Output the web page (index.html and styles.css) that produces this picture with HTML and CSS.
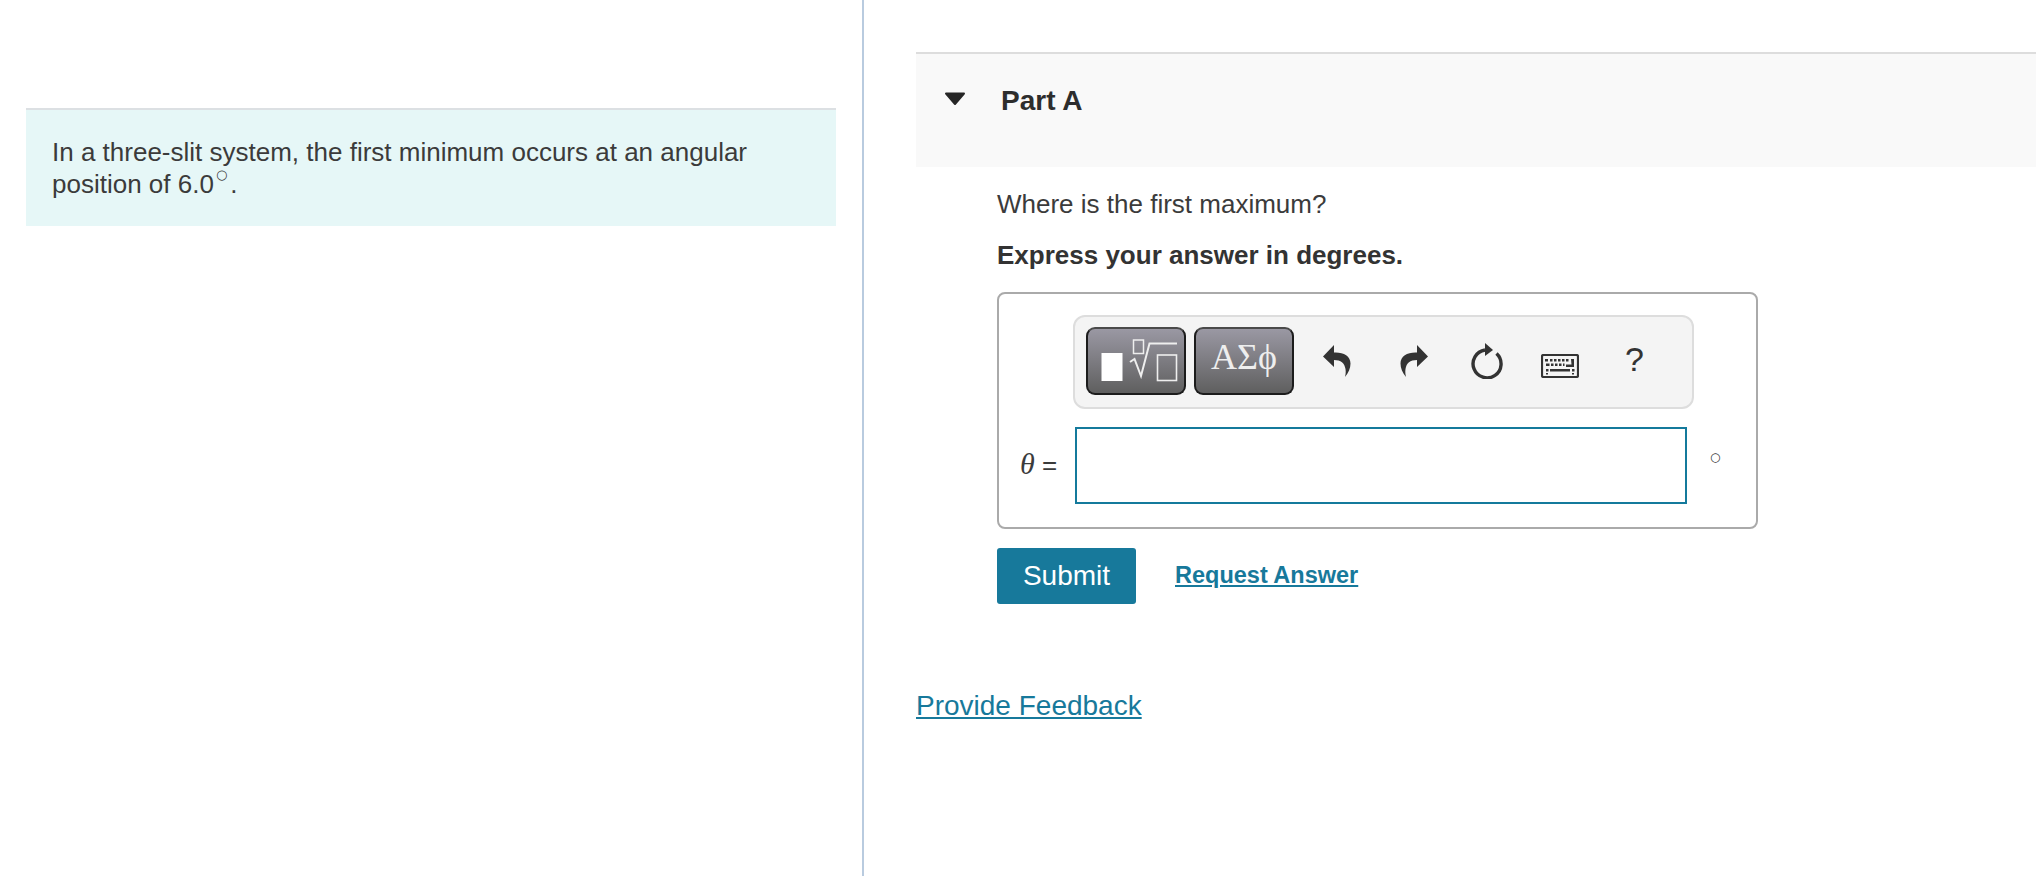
FILE: index.html
```html
<!DOCTYPE html>
<html lang="en">
<head>
<meta charset="utf-8">
<title>Part A</title>
<link rel="stylesheet" href="styles.css">
</head>
<body>
<div class="page">
  <aside class="intro-col">
    <div class="intro">In a three-slit system, the first minimum occurs at an angular position of 6.0<sup class="deg">○</sup>.</div>
  </aside>
  <main class="work-col">
    <header class="part-head">
      <svg class="caret" width="22" height="14" viewBox="0 0 22 14"><path d="M2 1.500H20L11 12Z" stroke="#262626" stroke-width="2" stroke-linejoin="round"/></svg>
      <h2 class="part-title">Part A</h2>
    </header>
    <section class="part-body">
      <p class="question">Where is the first maximum?</p>
      <p class="instruction">Express your answer in degrees.</p>
      <div class="answer-box">
        <div class="toolbar">
          <button class="tool-btn" type="button" aria-label="Templates">
            <svg width="96" height="64" viewBox="0 0 96 64"><rect x="13.500" y="24" width="21" height="28" fill="#fff"/><rect x="45.500" y="11" width="10" height="13.500" fill="none" stroke="#eee" stroke-width="1.500"/><path d="M42 33L46.500 30L53 47L61.500 14.500H89" fill="none" stroke="#eee" stroke-width="2"/><rect x="69.500" y="26" width="19" height="25.500" fill="none" stroke="#eee" stroke-width="1.600"/></svg>
          </button>
          <button class="tool-btn tool-text" type="button">ΑΣϕ</button>
          <span class="tool-icon undo"><svg width="28" height="32" viewBox="0 0 28 32"><path d="M11 0L0 11.500L11 22V15C18 15 21.500 18 22.500 24C23 27 22.500 30 22 32C25.500 28 27.500 23 27.500 18.500C27.500 10.500 20 7 11 7.500Z"/></svg></span>
          <span class="tool-icon redo"><svg width="28" height="32" viewBox="0 0 28 32"><path d="M17 0L28 11.500L17 22V15C10 15 6.500 18 5.500 24C5 27 5.500 30 6 32C2.500 28 .5 23 .5 18.500C.5 10.500 8 7 17 7.500Z"/></svg></span>
          <span class="tool-icon reload"><svg width="34" height="36" viewBox="0 0 34 36"><path d="M15 7A14 14 0 1 0 26.500 10.500" fill="none" stroke="#333" stroke-width="3.400"/><path d="M15 0L23 7L15 13Z"/></svg></span>
          <span class="tool-icon keyboard"><svg width="38" height="24" viewBox="0 0 38 24"><rect x="1" y="1" width="36" height="22" rx="1.500" fill="none" stroke="#333" stroke-width="2.200"/><path d="M4 5h3v2.500H4zM9 5h2.500v2.500H9zM13 5h2.500v2.500H13zM17 5h2.500v2.500H17zM21 5h2.500v2.500H21zM25 5h2.500v2.500H25zM30 5h3v8h-8v-2.500h5.500zM5 9.500h3.500v2.500H5zM10 9.500h2.500v2.500H10zM14 9.500h2.500v2.500H14zM18 9.500h2.500v2.500H18zM22 9.500h1.500v2.500H22zM9 15h20v2.500H9zM5 15h2.500v2.500H5zM31 15h2.500v2.500H31zM5 19h2v1.500H5zM31 19h2v1.500h-2z"/></svg></span>
          <span class="tool-help">?</span>
        </div>
        <div class="input-row">
          <span class="var-label"><i class="theta">θ</i> =</span>
          <input class="answer-input" type="text" aria-label="theta">
          <span class="unit">○</span>
        </div>
      </div>
      <div class="actions">
        <button class="submit" type="button">Submit</button>
        <a class="request" href="#">Request Answer</a>
      </div>
    </section>
    <a class="feedback" href="#">Provide Feedback</a>
  </main>
</div>
</body>
</html>
```
FILE: styles.css
```css
* { box-sizing: border-box; }
html, body { margin: 0; height: 100%; }
body {
  font-family: "Liberation Sans", Arial, sans-serif;
  color: #3b3b3b;
  background: #fff;
  overflow: hidden;
}
.page { display: flex; height: 876px; }
.intro-col {
  flex: 0 0 864px;
  padding: 108px 26px 0;
  border-right: 2px solid #b9cbdf;
}
.intro {
  width: 810px;
  height: 118px;
  padding: 26px 26px 0;
  background: #e6f7f7;
  border-top: 2px solid #dce0e3;
  font-size: 26px;
  line-height: 32px;
}
.deg { font-family: "DejaVu Sans", sans-serif; font-size: 13px; line-height: 0; vertical-align: 14px; margin: 0 3px 0 2px; }
.work-col { flex: 1; padding: 52px 0 0 52px; min-width: 0; }
.part-head {
  display: flex;
  align-items: flex-start;
  height: 115px;
  padding: 38px 0 0 28px;
  background: #f9f9f9;
  border-top: 2px solid #dddddd;
}
.caret { margin-top: 0; fill: #262626; }
.part-title {
  margin: -9px 0 0 35px;
  font-size: 28px;
  line-height: 36px;
  font-weight: bold;
  color: #2d2d2d;
}
.part-body { padding: 20px 0 0 81px; }
.question { margin: 0; font-size: 26px; line-height: 34px; }
.instruction { margin: 17px 0 0; font-size: 26px; line-height: 34px; font-weight: bold; color: #333; }
.answer-box {
  width: 761px;
  height: 237px;
  margin-top: 20px;
  padding: 21px 0 0 74px;
  border: 2px solid #aaa;
  border-radius: 8px;
}
.toolbar {
  display: flex;
  align-items: flex-start;
  width: 621px;
  height: 94px;
  padding: 10px 0 0 11px;
  background: #f4f4f4;
  border: 2px solid #ddd;
  border-radius: 12px;
}
.tool-btn {
  width: 100px;
  height: 68px;
  margin-right: 8px;
  padding: 0;
  border: 2px solid #1c1c1c;
  border-top-color: #4a4a4a;
  border-radius: 9px;
  background: linear-gradient(#9a98a3, #5f5f5f);
  display: flex;
  align-items: center;
  justify-content: center;
}
.tool-text {
  font-family: "Liberation Serif", "DejaVu Serif", serif;
  font-size: 36px;
  color: #eee;
  padding-bottom: 8px;
}
.tool-icon { display: block; fill: #333; }
.tool-icon svg { display: block; }
.undo { margin: 18px 0 0 21px; }
.redo { margin: 18px 0 0 49px; }
.reload { margin: 16px 0 0 42px; }
.keyboard { margin: 27px 0 0 37px; }
.tool-help { margin: 12px 0 0 46px; font-size: 34px; line-height: 40px; color: #333; }
.input-row { display: flex; align-items: flex-start; margin: 18px 0 0 -59px; }
.var-label {
  width: 59px;
  margin-top: 19px;
  padding-left: 6px;
  font-size: 26px;
  line-height: 36px;
  white-space: nowrap;
}
.theta { font-family: "Liberation Serif", serif; font-size: 30px; }
.answer-input {
  width: 612px;
  height: 77px;
  margin-left: 2px;
  border: 2px solid #147a9c;
  border-radius: 0;
  background: #fff;
  outline: none;
}
.unit { margin: 18px 0 0 23px; font-family: "DejaVu Sans", sans-serif; font-size: 12px; line-height: 24px; color: #333; }
.actions { display: flex; align-items: center; margin-top: 19px; }
.submit {
  width: 139px;
  height: 56px;
  padding: 0;
  border: 0;
  border-radius: 3px;
  background: #17799b;
  color: #fff;
  font-family: inherit;
  font-size: 28px;
}
.request {
  margin: 0 0 2px 39px;
  font-size: 23.500px;
  font-weight: bold;
  color: #17799b;
}
.feedback {
  display: inline-block;
  margin-top: 84px;
  font-size: 28px;
  line-height: 36px;
  color: #17799b;
}
```
